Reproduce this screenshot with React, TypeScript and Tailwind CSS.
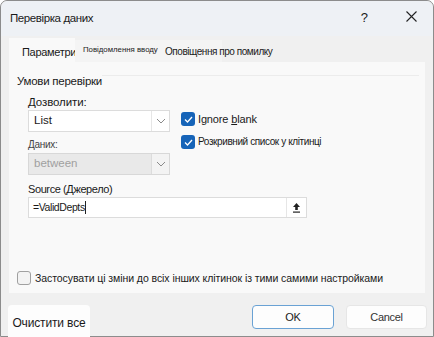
import React from 'react';

const font = { fontFamily: '"Liberation Sans", Arial, sans-serif' };

const Chevron = () => (
  <svg width="10" height="6" viewBox="0 0 10 6" fill="none">
    <path d="M1 1 L5 5 L9 1" stroke="#8a8a8a" strokeWidth="1" />
  </svg>
);

const Check = ({ checked }: { checked: boolean }) =>
  checked ? (
    <span className="w-[14px] h-[14px] rounded-[3px] bg-[#1664b8] flex items-center justify-center shrink-0">
      <svg width="9" height="7" viewBox="0 0 9 7" fill="none">
        <path d="M1 3.5 L3.5 6 L8 1" stroke="white" strokeWidth="1.3" />
      </svg>
    </span>
  ) : (
    <span className="w-[14px] h-[14px] rounded-[3px] border border-[#a0a0a0] bg-[#f3f3f3] shrink-0" />
  );

export default function App() {
  return (
    <div className="w-[434px] h-[337px] overflow-hidden bg-white whitespace-nowrap" style={font}>
      <div className="w-full h-full border border-[#8c8c8c] rounded-t-[7px] bg-[#f0f0f0] flex flex-col text-[#1a1a1a]">
        {/* title bar */}
        <div className="h-[35px] bg-[#eef1f5] rounded-t-[7px] flex items-center pl-[9px] pb-[1px] shrink-0">
          <span className="text-[11.5px] tracking-[-0.4px] mt-[2px]">Перевірка даних</span>
          <span className="ml-auto mr-[38px] text-[13px]">?</span>
          <svg width="11" height="11" viewBox="0 0 11 11" className="mr-[16px] mb-[3px]">
            <path d="M0.5 0.5 L10.5 10.5 M10.5 0.5 L0.5 10.5" stroke="#222" strokeWidth="1.1" />
          </svg>
        </div>
        {/* tabs */}
        <div className="flex items-end h-[24px] pl-[8px] mt-[2px] shrink-0">
          <div className="h-full w-[66px] bg-[#f9f9f9] flex items-center pl-[13px] pt-[5px] text-[11px] tracking-[-0.3px]">Параметри</div>
          <div className="h-[22px] w-[87px] flex items-center pl-[8px] pb-[3px] text-[7.8px] bg-[#f4f4f4]">Повідомлення вводу</div>
          <div className="h-[22px] w-[60px] flex items-center pl-[3px] pt-[1px] text-[10px] tracking-[-0.45px] bg-[#f4f4f4]">Оповіщення про помилку</div>
        </div>
        {/* panel */}
        <div className="mx-[8px] h-[231px] bg-[#f9f9f9] flex flex-col pl-[8px] pt-[12px] shrink-0">
          <div className="flex items-start">
            <span className="text-[11.5px] tracking-[-0.25px] leading-[14px]">Умови перевірки</span>
            <span className="flex-1 h-px bg-[#ececec] mt-[1px] mr-[6px]" />
          </div>
          <div className="flex mt-[7px] pl-[11px]">
            <div className="flex flex-col w-[142px]">
              <span className="text-[11.5px] tracking-[-0.1px] leading-[14px]">Дозволити:</span>
              <div className="mt-[1px] h-[22px] bg-white border border-[#dcdcdc] flex items-center pl-[5px] text-[11.5px]">
                <span>List</span>
                <span className="ml-auto h-full w-[18px] border-l border-[#e6e6e6] flex items-center justify-center"><Chevron /></span>
              </div>
              <span className="mt-[6px] text-[10px] tracking-[-0.3px] text-[#444] leading-[14px]">Даних:</span>
              <div className="mt-[1px] h-[22px] bg-[#e9e9e9] border border-[#d8d8d8] flex items-center pl-[5px] text-[11.5px] text-[#a0a0a0]">
                <span>between</span>
                <span className="ml-auto h-full w-[18px] border-l border-[#dcdcdc] bg-[#f3f3f3] flex items-center justify-center"><Chevron /></span>
              </div>
            </div>
            <div className="flex flex-col ml-[11px] mt-[17px] gap-[9px]">
              <div className="flex items-center gap-[3px] text-[11px] tracking-[-0.15px] leading-[14px]">
                <Check checked />
                <span>Ignore <span className="underline">b</span>lank</span>
              </div>
              <div className="flex items-center gap-[3px] text-[10px] tracking-[-0.4px] leading-[14px]">
                <Check checked />
                <span>Розкривний список у клітинці</span>
              </div>
            </div>
          </div>
          <div className="pl-[11px] mt-[7px] flex flex-col">
            <span className="text-[11px] tracking-[-0.4px] leading-[14px]">Source (Джерело)</span>
            <div className="mt-[1px] w-[279px] h-[21px] bg-white border border-[#dcdcdc] flex items-center pl-[4px] text-[10.5px] tracking-[-0.4px]">
              <span>=ValidDepts</span>
              <span className="w-px h-[13px] bg-[#222]" />
              <span className="ml-auto h-full w-[20px] border-l border-[#e6e6e6] flex items-center justify-center">
                <svg width="9" height="11" viewBox="0 0 9 11">
                  <path d="M4.5 1 L1 5 L3.2 5 L3.2 8 L5.8 8 L5.8 5 L8 5 Z" fill="#222" />
                  <rect x="1" y="9.5" width="7" height="1.2" fill="#222" />
                </svg>
              </span>
            </div>
          </div>
          <div className="flex items-center gap-[4px] mt-[53px] text-[10.5px] tracking-[-0.07px] leading-[14px]">
            <Check checked={false} />
            <span>Застосувати ці зміни до всіх інших клітинок із тими самими настройками</span>
          </div>
        </div>
        {/* buttons */}
        <div className="flex items-start pl-[7px] pr-[6px] mt-[12px]">
          <div className="w-[82px] h-[40px] bg-[#fdfdfd] rounded-[4px] flex items-start justify-center pt-[9px] text-[12px] tracking-[-0.15px]">Очистити все</div>
          <div className="ml-auto w-[82px] h-[24px] bg-[#fdfdfd] border border-[#6aa2d4] rounded-[4px] flex items-center justify-center text-[11px] tracking-[-0.2px]">OK</div>
          <div className="ml-[12px] w-[81px] h-[24px] bg-[#fdfdfd] border border-[#e6e6e6] rounded-[4px] flex items-center justify-center text-[11px] tracking-[-0.3px] text-[#333]">Cancel</div>
        </div>
      </div>
    </div>
  );
}
